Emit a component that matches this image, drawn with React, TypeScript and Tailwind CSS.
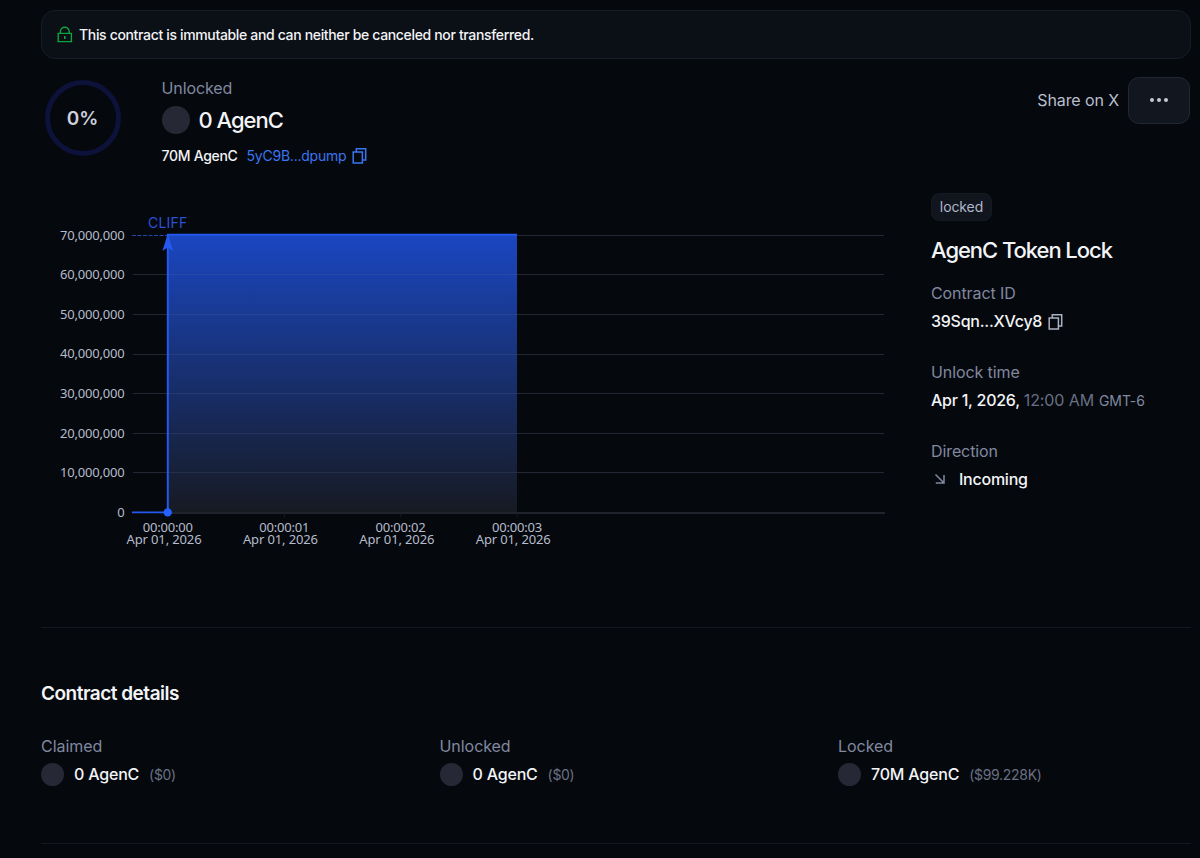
import type { ReactNode } from "react";

function LockIcon() {
  return (
    <svg width="16" height="17" viewBox="0 0 16 17" fill="none" stroke="#0fa53c" strokeWidth="1.4">
      <path d="M1.2 7.4h13.2v8.2H1.2z" />
      <path d="M3.4 7.4V5.6a4.4 4.4 0 0 1 8.8 0v1.8" />
      <path d="M7.8 10v3" strokeWidth="1.6" />
    </svg>
  );
}

function CopyIcon({ className }: { className: string }) {
  return (
    <svg className={className} width="16" height="17" viewBox="0 0 16 17" fill="none" stroke="currentColor" strokeWidth="1.5">
      <path d="M1.2 4.9h9.2v11H1.2z" />
      <path d="M4.3 4.9V1.8h9.4V13h-3.3" />
    </svg>
  );
}

const yTicks = ["70,000,000", "60,000,000", "50,000,000", "40,000,000", "30,000,000", "20,000,000", "10,000,000", "0"];
const xTicks = ["00:00:00", "00:00:01", "00:00:02", "00:00:03"];
const TOP = 40.5;
const STEP = 39.57;

function Chart() {
  return (
    <svg width="860" height="360" viewBox="0 0 860 360" className="block shrink-0">
      <defs>
        <linearGradient id="area" x1="0" y1="0" x2="0" y2="1">
          <stop offset="0" stopColor="#1a46c0" />
          <stop offset="1" stopColor="#161a22" />
        </linearGradient>
      </defs>
      <rect x="127" y="40" width="349" height="277" fill="url(#area)" />
      {yTicks.map((label, i) => {
        const y = TOP + STEP * i;
        const line = Math.floor(y - 0.2) + 0.5;
        return (
          <g key={label}>
            {i > 0 && i < 7 && (
              <>
                <line x1="92" x2="127" y1={line} y2={line} stroke="#232733" />
                <line x1="127" x2="476" y1={line} y2={line} stroke="#7c88a8" strokeOpacity="0.15" />
              </>
            )}
            {i < 7 && <line x1="476" x2="843" y1={line} y2={line} stroke="#232733" />}
            <text x="83.4" y={y + 4.2} textAnchor="end" fill="#b6bccb" className="font-['Noto_Sans',sans-serif] text-[13px] tracking-[-0.2px]">
              {label}
            </text>
          </g>
        );
      })}
      <line x1="127" x2="844" y1="318" y2="318" stroke="#2a2d36" strokeWidth="1.5" />
      {xTicks.map((label, i) => {
        const x = 127 + i * 116.4;
        return (
          <g key={label}>
            <line x1={x} x2={x} y1="318" y2="322" stroke="#1b1e26" />
            <text textAnchor="middle" fill="#b6bccb" className="font-['Noto_Sans',sans-serif] text-[13px] tracking-[-0.2px]">
              <tspan x={x - 0.2} y="336.6">{label}</tspan>
              <tspan x={x - 4} y="348.9" className="tracking-[-0.13px]">Apr 01, 2026</tspan>
            </text>
          </g>
        );
      })}
      <line x1="91" x2="127" y1="40.5" y2="40.5" stroke="#2346a8" strokeDasharray="4 1.5" />
      <line x1="91" x2="127" y1="317.4" y2="317.4" stroke="#2458ee" strokeWidth="1.8" />
      <path d="M126.8 317.5V40M126 39.7h350" stroke="#2458ee" strokeWidth="2" fill="none" />
      <path d="M126.8 39l5.4 17-5.4-3.4-5.4 3.4z" fill="#2458ee" />
      <circle cx="126.7" cy="317.4" r="4.2" fill="#2360ff" />
      <text x="107" y="33" fill="#2b52d6" className="font-[Inter,sans-serif] text-[14px] tracking-[0.2px]">CLIFF</text>
    </svg>
  );
}

function Stat({ label, amount, usd }: { label: string; amount: string; usd: string }) {
  return (
    <div className="w-[398.5px] shrink-0">
      <div className="h-6 text-base leading-6 tracking-[-0.05px] text-[#8188a0]">{label}</div>
      <div className="mt-1 flex h-6 items-center">
        <span className="size-[23px] rounded-full bg-[#262935]" />
        <span className="ml-[10px] text-base font-medium tracking-[-0.2px] text-[#f3f4f7]">{amount}</span>
        <span className="ml-[10px] text-[14px] tracking-[-0.3px] text-[#697083]">{usd}</span>
      </div>
    </div>
  );
}

function Field({ label, children }: { label: string; children: ReactNode }) {
  return (
    <div className="h-[79.3px]">
      <div className="h-6 text-base leading-6 tracking-[-0.1px] text-[#8188a0]">{label}</div>
      <div className="mt-1 flex h-6 items-center whitespace-nowrap text-base font-medium tracking-[-0.25px] text-[#f3f4f7]">{children}</div>
    </div>
  );
}

export default function App() {
  return (
    <main className="h-[858px] w-[1200px] overflow-hidden bg-[#05080d] pt-[10px] pr-[9px] pl-[41px] font-[Inter,sans-serif] text-[#f3f4f7]">
      <div className="flex h-[49px] items-center rounded-[14px] border border-[#181c25] bg-[#0b0f16] pl-[14.5px]">
        <LockIcon />
        <span className="ml-[6.5px] text-[14px] font-medium tracking-[-0.34px]">This contract is immutable and can neither be canceled nor transferred.</span>
      </div>

      <div className="flex h-[136px] pt-[18px]">
        <div className="flex w-[120.5px] shrink-0 pt-[3px] pl-[3.5px]">
          <div className="flex size-[76px] items-center justify-center rounded-full border-[5px] border-[#0d123b] pt-[2px] text-[19px] font-semibold text-[#cdd1dc]">
            0%
          </div>
        </div>
        <div className="grow">
          <div className="-mt-px h-6 text-base leading-6 tracking-[-0.1px] text-[#8188a0]">Unlocked</div>
          <div className="mt-[6px] flex h-7 items-center">
            <span className="size-7 rounded-full bg-[#262935]" />
            <span className="ml-[9px] text-[22px] font-[450] tracking-[-1px]">0 AgenC</span>
          </div>
          <div className="mt-[11px] flex h-5 items-center text-[14px]">
            <span className="font-medium tracking-[-0.3px]">70M AgenC</span>
            <span className="ml-[9px] tracking-[-0.23px] text-[#3a75f0]">5yC9B...dpump</span>
            <CopyIcon className="ml-[6px] text-[#3a75f0]" />
          </div>
        </div>
        <div className="mr-px flex h-[46px] items-center">
          <span className="pb-px text-base tracking-[-0.1px] text-[#b9bfce]">Share on X</span>
          <button className="ml-[9px] flex h-[47px] w-[62px] items-center justify-center gap-[3px] rounded-[11px] border border-[#232733] bg-[#12161f]" aria-label="More">
            <span className="size-1 rounded-full bg-[#c3c8d6]" />
            <span className="size-1 rounded-full bg-[#c3c8d6]" />
            <span className="size-1 rounded-full bg-[#c3c8d6]" />
          </button>
        </div>
      </div>

      <div className="flex h-[433px] border-b border-[#14181e]">
        <Chart />
        <aside className="ml-[30px] w-[259px]">
          <div className="-mt-[2px] flex h-7 w-[61px] items-center justify-center rounded-lg border border-[#151922] bg-[#11151e] pb-[2px] text-[14px] tracking-[-0.1px] text-[#b0b7c8]">
            locked
          </div>
          <h1 className="mt-[13px] h-8 text-[22px] leading-8 font-[450] tracking-[-1.05px]">AgenC Token Lock</h1>
          <div className="mt-[15px]">
            <Field label="Contract ID">
              39Sqn...XVcy8
              <CopyIcon className="ml-[6px] text-[#aab1c2]" />
            </Field>
            <Field label="Unlock time">
              Apr 1, 2026,
              <span className="ml-1 font-normal tracking-[-0.1px] text-[#697083]">12:00 AM</span>
              <span className="ml-[5px] text-[14px] font-normal tracking-[-0.1px] text-[#8188a0]">GMT-6</span>
            </Field>
            <div className="-mt-[0.6px]">
              <Field label="Direction">
                <svg width="18" height="18" viewBox="0 0 18 18" fill="none" stroke="#8188a0" strokeWidth="1.5">
                  <path d="M4.5 4.5l8.5 8.5M13 5v8H4.8" />
                </svg>
                <span className="ml-[10px]">Incoming</span>
              </Field>
            </div>
          </div>
        </aside>
      </div>

      <section className="h-[216px] border-b border-[#14181e] pt-[51px]">
        <h2 className="h-[29px] text-[19px] leading-[29px] font-semibold tracking-[-0.5px]">Contract details</h2>
        <div className="mt-[26px] flex">
          <Stat label="Claimed" amount="0 AgenC" usd="($0)" />
          <Stat label="Unlocked" amount="0 AgenC" usd="($0)" />
          <Stat label="Locked" amount="70M AgenC" usd="($99.228K)" />
        </div>
      </section>
    </main>
  );
}
